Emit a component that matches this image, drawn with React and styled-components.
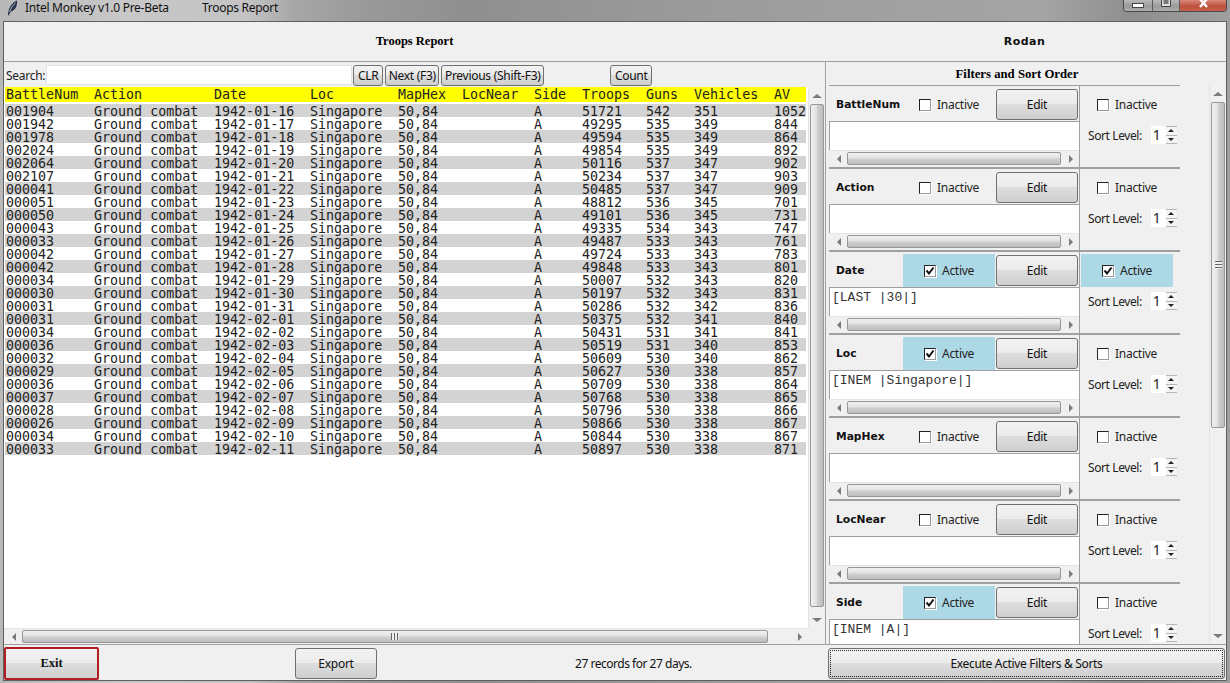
import React from "react";
import styled, { createGlobalStyle } from "styled-components";

const UI_FONT = `"Noto Sans", "Open Sans", sans-serif`;
const SERIF = `"Liberation Serif", serif`;
const MONO = `"DejaVu Sans Mono", monospace`;
const COLUMNS = "88px 120px 96px 88px 64px 72px 48px 64px 48px 80px 32px";
const BUTTON_BG = "linear-gradient(#f2f2f2 0%, #ebebeb 48%, #dddddd 50%, #cfcfcf 100%)";

const GlobalStyle = createGlobalStyle`
  html, body { margin: 0; padding: 0; background: #9a9a9a; }
  * { box-sizing: border-box; }
`;

const Window = styled.div`
  width: 1230px;
  height: 683px;
  display: flex;
  flex-direction: column;
  overflow: hidden;
  background: linear-gradient(90deg, #b8b8b8 0%, #c8c8c8 10%, #c4c4c4 20%, #a6a6a6 24%, #999 30%, #8f8f8f 38%, #9a9a9a 55%, #a0a0a0 70%, #a4a4a4 85%, #8e8e8e 92%, #a0a0a0 100%);
`;

const TitleBar = styled.div`
  height: 21px;
  flex: none;
  display: flex;
  align-items: flex-start;
  padding-left: 7px;
  font: 12px ${UI_FONT};
  letter-spacing: -0.28px;
  color: #111;
  line-height: 15px;
`;

const AppName = styled.span`
  margin-left: 7px;
  width: 177px;
`;

const WindowButtons = styled.div`
  margin-left: auto;
  margin-right: 3px;
  height: 12px;
  display: flex;
  border: 1px solid #4a4a4a;
  border-top: 0;
  border-radius: 0 0 4px 4px;
  overflow: hidden;
`;

const WindowButton = styled.div`
  width: ${p => p.$w}px;
  display: flex;
  align-items: ${p => (p.$first ? "center" : "flex-start")};
  justify-content: center;
  border-left: ${p => (p.$first ? "0" : "1px solid #5a5a5a")};
  background: ${p =>
    p.$close
      ? "linear-gradient(#d98a7c, #c0503e 55%, #c8604c)"
      : "linear-gradient(#b9b9b9, #9a9a9a 55%, #adadad)"};
`;

const Frame = styled.div`
  flex: 1;
  margin: 0 3px 2px;
  border: 1px solid #5f5f5f;
  background: #f0f0f0;
  display: flex;
  flex-direction: column;
  min-height: 0;
`;

const Header = styled.div`
  height: 40px;
  flex: none;
  display: grid;
  grid-template-columns: 821px 1fr;
  align-items: center;
  padding-bottom: 1px;
  border-bottom: 1px solid #a0a0a0;
`;

const ReportTitle = styled.div`
  font: bold 12.5px ${SERIF};
  text-align: center;
`;

const UserName = styled.div`
  font: bold 11px "DejaVu Sans", sans-serif;
  letter-spacing: 0.5px;
  text-align: center;
  padding-right: 2px;
  color: #111;
`;

const Main = styled.div`
  flex: 1;
  min-height: 0;
  display: flex;
`;

const LeftPane = styled.div`
  width: 822px;
  flex: none;
  display: flex;
  flex-direction: column;
  border-right: 1px solid #a0a0a0;
`;

const SearchRow = styled.div`
  height: 25px;
  flex: none;
  display: flex;
  align-items: center;
  padding: 1px 0 0 2px;
  font: 12px ${UI_FONT};
  letter-spacing: -0.28px;
  color: #222;
`;

const SearchInput = styled.div`
  width: 306px;
  height: 20px;
  margin: 0 1px 0 1px;
  background: #fff;
  border: 1px solid #e2e3ea;
`;

const SmallButton = styled.button`
  width: ${p => p.$w}px;
  height: 21px;
  padding: 0;
  margin: 0 ${p => p.$gap || 2}px 0 0;
  border: 1px solid #707070;
  border-radius: 3px;
  background: ${BUTTON_BG};
  font: 12px ${UI_FONT};
  letter-spacing: -0.28px;
  color: #111;
  white-space: nowrap;
`;

const TableArea = styled.div`
  flex: 1;
  min-height: 0;
  display: grid;
  grid-template-columns: 1fr 17px;
  grid-template-rows: 1fr 16px;
`;

const TableBody = styled.div`
  background: #fff;
  padding-left: 1px;
  font: 13.33px/13px ${MONO};
  color: #222;
  overflow: hidden;
`;

const HeadRow = styled.div`
  display: grid;
  grid-template-columns: ${COLUMNS};
  height: 15px;
  width: 801px;
  padding-left: 1px;
  margin-bottom: 2px;
  background: #ffff00;
  line-height: 15px;
`;

const DataRow = styled.div`
  display: grid;
  grid-template-columns: ${COLUMNS};
  height: 13px;
  width: 801px;
  padding-left: 1px;
  line-height: 15px;
  background: ${p => (p.$shaded ? "#d3d3d3" : "#fff")};
`;

const Cell = styled.span`
  white-space: pre;
`;

const Bar = styled.div`
  display: flex;
  flex-direction: ${p => (p.$vertical ? "column" : "row")};
  align-items: stretch;
  padding-left: ${p => p.$inset || 0}px;
  background: #f0f0f0;
  border-left: ${p => (p.$vertical ? "1px solid #e4e4e4" : "0")};
  border-top: ${p => (p.$vertical ? "0" : "1px solid #e4e4e4")};
`;

const Arrow = styled.div`
  flex: none;
  width: ${p => (p.$vertical ? "100%" : "17px")};
  height: ${p => (p.$vertical ? "17px" : "100%")};
  display: flex;
  align-items: center;
  justify-content: center;
  &::before {
    content: "";
    border: 4px solid transparent;
    ${p => p.$dir === "up" && "border-bottom: 4px solid #7a7a7a; border-top: 0; border-left-width: 5px; border-right-width: 5px;"}
    ${p => p.$dir === "down" && "border-top: 4px solid #7a7a7a; border-bottom: 0; border-left-width: 5px; border-right-width: 5px;"}
    ${p => p.$dir === "left" && "border-right: 4px solid #7a7a7a; border-left: 0;"}
    ${p => p.$dir === "right" && "border-left: 4px solid #7a7a7a; border-right: 0;"}
  }
`;

const Track = styled.div`
  flex: 1;
  min-width: 0;
  min-height: 0;
  display: flex;
  flex-direction: ${p => (p.$vertical ? "column" : "row")};
  padding: ${p => (p.$vertical ? "0 1px" : "1px 0")};
`;

const Thumb = styled.div`
  flex: ${p => (p.$size ? `0 0 ${p.$size}px` : 1)};
  display: flex;
  align-items: center;
  justify-content: center;
  border: 1px solid #979797;
  border-radius: 2px;
  background: ${p =>
    p.$vertical
      ? "linear-gradient(90deg, #f1f1f1, #e2e2e2 45%, #cfcfcf 55%, #bdbdbd)"
      : "linear-gradient(#f1f1f1, #e2e2e2 45%, #cfcfcf 55%, #bdbdbd)"};
`;

const Grip = styled.span`
  width: ${p => (p.$vertical ? "7px" : "8px")};
  height: ${p => (p.$vertical ? "8px" : "7px")};
  background: ${p =>
    p.$vertical
      ? "repeating-linear-gradient(180deg, #666 0 1px, #eee 1px 3px)"
      : "repeating-linear-gradient(90deg, #666 0 1px, #eee 1px 3px)"};
`;

const RightPane = styled.div`
  flex: 1;
  min-width: 0;
  display: flex;
  flex-direction: column;
  overflow: hidden;
`;

const FiltersTitle = styled.div`
  height: 23px;
  flex: none;
  padding: 5px 18px 0 0;
  font: bold 12.75px/14px ${SERIF};
  text-align: center;
`;

const FiltersBody = styled.div`
  flex: 1;
  min-height: 0;
  display: grid;
  grid-template-columns: 1fr 17px;
`;

const FiltersList = styled.div`
  padding-left: 3px;
  overflow: hidden;
`;

const FilterBlock = styled.div`
  width: 351px;
  height: 83px;
  display: grid;
  grid-template-columns: 251px 100px;
  border-top: 1px solid #a0a0a0;
  border-bottom: 1px solid #a0a0a0;
`;

const FilterSide = styled.div`
  border-right: ${p => (p.$main ? "1px solid #a0a0a0" : "0")};
  display: flex;
  flex-direction: column;
  padding-top: 2px;
`;

const FilterTop = styled.div`
  height: 33px;
  flex: none;
  display: grid;
  grid-template-columns: 74px 92px 83px;
`;

const FilterName = styled.div`
  padding-left: 7px;
  font: bold 10.7px/33px "DejaVu Sans", sans-serif;
  color: #111;
`;

const ToggleBox = styled.div`
  height: 33px;
  display: flex;
  align-items: center;
  padding-left: ${p => p.$pad}px;
  gap: 6px;
  font: 12px ${UI_FONT};
  letter-spacing: -0.28px;
  color: #222;
  background: ${p => (p.$on ? "#add8e6" : "transparent")};
`;

const SortToggle = styled(ToggleBox)`
  width: 92px;
  margin-left: 1px;
`;

const CheckBox = styled.span`
  width: 12px;
  height: 12px;
  flex: none;
  display: flex;
  border-top: 1px solid #222;
  border-left: 1px solid #222;
  border-right: 1px solid #999;
  border-bottom: 1px solid #999;
  box-shadow: 1px 1px 0 #fff;
  background: #fff;
`;

const EditButton = styled.button`
  height: 31px;
  width: 82px;
  margin: 1px 0 0 1px;
  border: 1px solid #707070;
  border-radius: 3px;
  background: ${BUTTON_BG};
  font: 12px ${UI_FONT};
  letter-spacing: -0.28px;
  color: #111;
`;

const FilterValue = styled.div`
  height: 29px;
  flex: none;
  border-top: 1px solid #a0a0a0;
  border-left: 1px solid #a0a0a0;
  background: #fff;
  padding: 3px 0 0 2px;
  font: 13px/14px "Liberation Mono", monospace;
  color: #333;
  white-space: pre;
`;

const ValueBar = styled(Bar)`
  height: 16px;
  flex: none;
`;

const SortRow = styled.div`
  display: flex;
  align-items: center;
  height: 18px;
  margin-top: 5px;
  padding-left: 8px;
  font: 12px ${UI_FONT};
  letter-spacing: -0.4px;
  color: #222;
  white-space: nowrap;
`;

const Spinner = styled.div`
  margin-left: 9px;
  width: 26px;
  height: 18px;
  flex: none;
  background: #fff;
  display: flex;
  justify-content: space-between;
  padding-left: 2px;
  font-size: 14px;
  line-height: 18px;
`;

const SpinArrows = styled.div`
  width: 11px;
  display: flex;
  flex-direction: column;
`;

const SpinCell = styled.div`
  flex: 1;
  display: flex;
  align-items: center;
  justify-content: center;
  background: #f4f4f4;
  border: 1px solid #b5b5b5;
  border-width: ${p => (p.$up ? "1px 0 0" : "1px 0")};
  &::before {
    content: "";
    border: 3px solid transparent;
    ${p => (p.$up ? "border-bottom: 3px solid #222; border-top: 0;" : "border-top: 3px solid #222; border-bottom: 0;")}
  }
`;

const Footer = styled.div`
  height: 36px;
  flex: none;
  display: grid;
  grid-template-columns: 95px 196px 94px 1fr 398px;
  align-items: center;
  border-top: 1px solid #a0a0a0;
  padding-top: 1px;
`;

const ExitButton = styled.button`
  height: 33px;
  width: 95px;
  border: 2px solid #b21c22;
  border-radius: 2px;
  background: ${BUTTON_BG};
  font: bold 12.5px ${SERIF};
  color: #111;
`;

const FooterButton = styled.button`
  height: 31px;
  width: 82px;
  justify-self: start;
  border: 1px solid #707070;
  border-radius: 3px;
  background: ${BUTTON_BG};
  font: 12px ${UI_FONT};
  letter-spacing: -0.28px;
  color: #111;
`;

const Status = styled.div`
  font: 12px ${UI_FONT};
  letter-spacing: -0.48px;
  color: #111;
  padding-left: 186px;
  white-space: nowrap;
`;

const ExecuteButton = styled.button`
  height: 31px;
  width: 397px;
  border: 1px solid #707070;
  border-radius: 3px;
  outline: 1px dotted #222;
  outline-offset: -3px;
  background: ${BUTTON_BG};
  font: 12px ${UI_FONT};
  letter-spacing: -0.33px;
  color: #111;
`;

const HEADS = ["BattleNum", "Action", "Date", "Loc", "MapHex", "LocNear", "Side", "Troops", "Guns", "Vehicles", "AV"];

const ROWS = [
  ["001904", "01-16", 51721, 542, 351, 1052],
  ["001942", "01-17", 49295, 535, 349, 844],
  ["001978", "01-18", 49594, 535, 349, 864],
  ["002024", "01-19", 49854, 535, 349, 892],
  ["002064", "01-20", 50116, 537, 347, 902],
  ["002107", "01-21", 50234, 537, 347, 903],
  ["000041", "01-22", 50485, 537, 347, 909],
  ["000051", "01-23", 48812, 536, 345, 701],
  ["000050", "01-24", 49101, 536, 345, 731],
  ["000043", "01-25", 49335, 534, 343, 747],
  ["000033", "01-26", 49487, 533, 343, 761],
  ["000042", "01-27", 49724, 533, 343, 783],
  ["000042", "01-28", 49848, 533, 343, 801],
  ["000034", "01-29", 50007, 532, 343, 820],
  ["000030", "01-30", 50197, 532, 343, 831],
  ["000031", "01-31", 50286, 532, 342, 836],
  ["000031", "02-01", 50375, 532, 341, 840],
  ["000034", "02-02", 50431, 531, 341, 841],
  ["000036", "02-03", 50519, 531, 340, 853],
  ["000032", "02-04", 50609, 530, 340, 862],
  ["000029", "02-05", 50627, 530, 338, 857],
  ["000036", "02-06", 50709, 530, 338, 864],
  ["000037", "02-07", 50768, 530, 338, 865],
  ["000028", "02-08", 50796, 530, 338, 866],
  ["000026", "02-09", 50866, 530, 338, 867],
  ["000034", "02-10", 50844, 530, 338, 867],
  ["000033", "02-11", 50897, 530, 338, 871],
];

const FILTERS = [
  { name: "BattleNum", on: false, sort: false, value: "" },
  { name: "Action", on: false, sort: false, value: "" },
  { name: "Date", on: true, sort: true, value: "[LAST |30|]" },
  { name: "Loc", on: true, sort: false, value: "[INEM |Singapore|]" },
  { name: "MapHex", on: false, sort: false, value: "" },
  { name: "LocNear", on: false, sort: false, value: "" },
  { name: "Side", on: true, sort: false, value: "[INEM |A|]" },
];

function Scrollbar({ vertical, size, grip, inset }) {
  return (
    <Bar $vertical={vertical} $inset={inset}>
      <Arrow $vertical={vertical} $dir={vertical ? "up" : "left"} />
      <Track $vertical={vertical}>
        <Thumb $vertical={vertical} $size={size}>
          {grip ? <Grip $vertical={vertical} /> : null}
        </Thumb>
      </Track>
      <Arrow $vertical={vertical} $dir={vertical ? "down" : "right"} />
    </Bar>
  );
}

function Check({ on }) {
  return (
    <CheckBox>
      {on ? (
        <svg width="10" height="10" viewBox="0 0 10 10">
          <path d="M1.5 4.5 L4 7.5 L8.5 1.5" fill="none" stroke="#111" strokeWidth="2" />
        </svg>
      ) : null}
    </CheckBox>
  );
}

function Filter({ filter }) {
  return (
    <FilterBlock>
      <FilterSide $main>
        <FilterTop>
          <FilterName>{filter.name}</FilterName>
          <ToggleBox $on={filter.on} $pad={filter.on ? 21 : 16}>
            <Check on={filter.on} />
            {filter.on ? "Active" : "Inactive"}
          </ToggleBox>
          <EditButton>Edit</EditButton>
        </FilterTop>
        <FilterValue>{filter.value}</FilterValue>
        <ValueBar $inset={1}>
          <Arrow $dir="left" />
          <Track>
            <Thumb $size={214} />
          </Track>
          <Arrow $dir="right" />
        </ValueBar>
      </FilterSide>
      <FilterSide>
        <SortToggle $on={filter.sort} $pad={filter.sort ? 21 : 16}>
          <Check on={filter.sort} />
          {filter.sort ? "Active" : "Inactive"}
        </SortToggle>
        <SortRow>
          Sort Level:
          <Spinner>
            1
            <SpinArrows>
              <SpinCell $up />
              <SpinCell />
            </SpinArrows>
          </Spinner>
        </SortRow>
      </FilterSide>
    </FilterBlock>
  );
}

function App() {
  return (
    <Window>
      <GlobalStyle />
      <TitleBar>
        <svg width="11" height="16" viewBox="0 0 11 16">
          <path d="M1 15.5 C1 9 4 3 10 0.5 C10.5 5 9 10 4 11.5 L1.6 15.5Z" fill="#26324a" />
          <path d="M2.5 12 C4 8 6 5 8.5 3" fill="none" stroke="#d8dde6" strokeWidth="0.8" />
        </svg>
        <AppName>Intel Monkey v1.0 Pre-Beta</AppName>
        <span>Troops Report</span>
        <WindowButtons>
          <WindowButton $first $w={28}>
            <svg width="12" height="5" viewBox="0 0 12 5"><rect x="0.5" y="0.5" width="11" height="4" fill="#fff" stroke="#444" /></svg>
          </WindowButton>
          <WindowButton $w={27}>
            <svg width="10" height="7" viewBox="0 0 10 7"><path d="M0.5 0 V6.5 H9.5 V0" fill="#ddd" stroke="#444" /><rect x="2.5" y="0" width="5" height="4" fill="#777" /></svg>
          </WindowButton>
          <WindowButton $close $w={47}>
            <svg width="11" height="8" viewBox="0 0 11 8"><path d="M2 -1 L9 7 M9 -1 L2 7" stroke="#fff" strokeWidth="2.4" /></svg>
          </WindowButton>
        </WindowButtons>
      </TitleBar>
      <Frame>
        <Header>
          <ReportTitle>Troops Report</ReportTitle>
          <UserName>Rodan</UserName>
        </Header>
        <Main>
          <LeftPane>
            <SearchRow>
              Search:
              <SearchInput />
              <SmallButton $w={30}>CLR</SmallButton>
              <SmallButton $w={54}>Next (F3)</SmallButton>
              <SmallButton $w={103} $gap={66}>Previous (Shift-F3)</SmallButton>
              <SmallButton $w={42}>Count</SmallButton>
            </SearchRow>
            <TableArea>
              <TableBody>
                <HeadRow>
                  {HEADS.map(h => (
                    <Cell key={h}>{h}</Cell>
                  ))}
                </HeadRow>
                {ROWS.map((r, i) => (
                  <DataRow key={r[1]} $shaded={i % 2 === 0}>
                    <Cell>{r[0]}</Cell>
                    <Cell>Ground combat</Cell>
                    <Cell>1942-{r[1]}</Cell>
                    <Cell>Singapore</Cell>
                    <Cell>50,84</Cell>
                    <Cell />
                    <Cell>A</Cell>
                    <Cell>{r[2]}</Cell>
                    <Cell>{r[3]}</Cell>
                    <Cell>{r[4]}</Cell>
                    <Cell>{r[5]}</Cell>
                  </DataRow>
                ))}
              </TableBody>
              <Scrollbar vertical size={503} />
              <Scrollbar size={746} grip inset={1} />
              <div />
            </TableArea>
          </LeftPane>
          <RightPane>
            <FiltersTitle>Filters and Sort Order</FiltersTitle>
            <FiltersBody>
              <FiltersList>
                {FILTERS.map(f => (
                  <Filter key={f.name} filter={f} />
                ))}
              </FiltersList>
              <Scrollbar vertical size={326} grip />
            </FiltersBody>
          </RightPane>
        </Main>
        <Footer>
          <ExitButton>Exit</ExitButton>
          <div />
          <FooterButton>Export</FooterButton>
          <Status>27 records for 27 days.</Status>
          <ExecuteButton>Execute Active Filters &amp; Sorts</ExecuteButton>
        </Footer>
      </Frame>
    </Window>
  );
}

export default App;
